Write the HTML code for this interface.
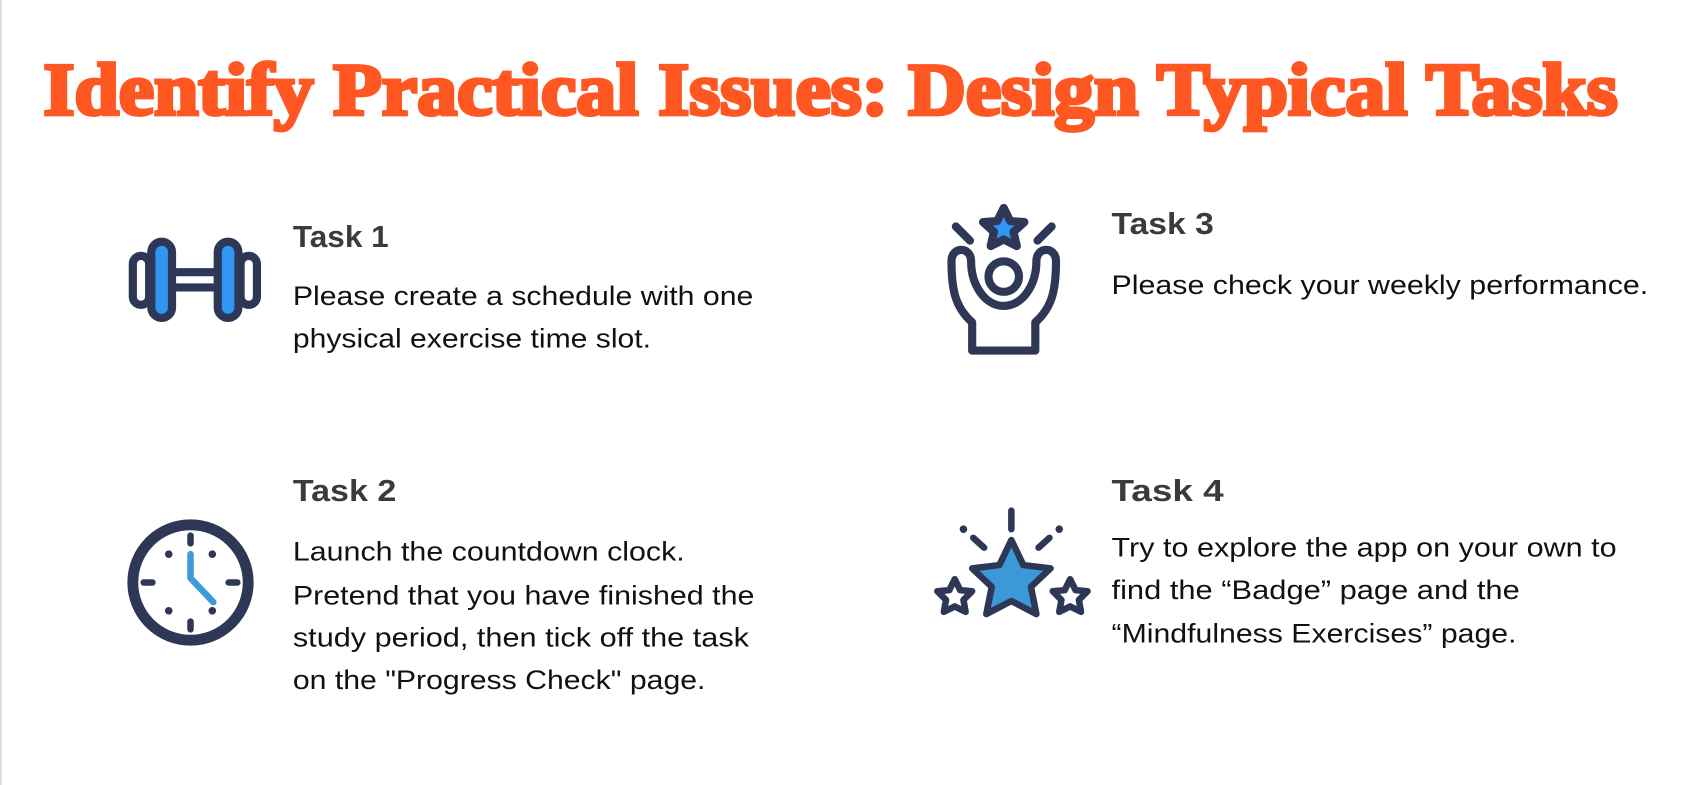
<!DOCTYPE html>
<html><head><meta charset="utf-8"><style>
html,body{margin:0;padding:0;background:#fff;width:1707px;height:785px;overflow:hidden}
svg{display:block}
</style></head><body>
<svg width="1707" height="785" viewBox="0 0 1568 721" preserveAspectRatio="none" xmlns="http://www.w3.org/2000/svg">
<rect x="0" y="0" width="1.5" height="721" fill="#d8d8d8"/>
<text x="40" y="105" font-family="Liberation Serif, serif" font-weight="bold" font-size="68" fill="#FF5722" stroke="#FF5722" stroke-width="3.5" textLength="1446" lengthAdjust="spacingAndGlyphs">Identify Practical Issues: Design Typical Tasks</text>

<g font-family="Liberation Sans, sans-serif" fill="#3b3b3b">
<text x="269" y="227" font-weight="bold" font-size="28" textLength="88" lengthAdjust="spacingAndGlyphs">Task 1</text>
<text x="1021" y="215" font-weight="bold" font-size="28" textLength="94" lengthAdjust="spacingAndGlyphs">Task 3</text>
<text x="269" y="460" font-weight="bold" font-size="28" textLength="95" lengthAdjust="spacingAndGlyphs">Task 2</text>
<text x="1021" y="460" font-weight="bold" font-size="28" textLength="103" lengthAdjust="spacingAndGlyphs">Task  4</text>
</g>
<g font-family="Liberation Sans, sans-serif" fill="#111" font-size="25">
<text x="269" y="280" textLength="423" lengthAdjust="spacingAndGlyphs">Please create a schedule with one</text>
<text x="269" y="319" textLength="329" lengthAdjust="spacingAndGlyphs">physical exercise time slot.</text>
<text x="1021" y="270" textLength="493" lengthAdjust="spacingAndGlyphs">Please check your weekly performance.</text>
<text x="269" y="515" textLength="360" lengthAdjust="spacingAndGlyphs">Launch the countdown clock.</text>
<text x="269" y="555" textLength="424" lengthAdjust="spacingAndGlyphs">Pretend that you have finished the</text>
<text x="269" y="594" textLength="419" lengthAdjust="spacingAndGlyphs">study period, then tick off the task</text>
<text x="269" y="633" textLength="379" lengthAdjust="spacingAndGlyphs">on the "Progress Check" page.</text>
<text x="1021" y="511" textLength="464" lengthAdjust="spacingAndGlyphs">Try to explore the app on your own to</text>
<text x="1021" y="550" textLength="375" lengthAdjust="spacingAndGlyphs">find the “Badge” page and the</text>
<text x="1021" y="590" textLength="372" lengthAdjust="spacingAndGlyphs">“Mindfulness Exercises” page.</text>
</g>

<!-- dumbbell -->
<g stroke="#2e3856" stroke-width="7.5" stroke-linejoin="round">
<rect x="122" y="235" width="15" height="45" rx="7.5" fill="#fff"/>
<rect x="221" y="235" width="15" height="45" rx="7.5" fill="#fff"/>
<rect x="157" y="250" width="44" height="14" fill="#fff"/>
<rect x="139" y="222" width="19" height="70" rx="9.5" fill="#2f96f3"/>
<rect x="200" y="222" width="19" height="70" rx="9.5" fill="#2f96f3"/>
</g>

<!-- clock -->
<g stroke="#2e3856" stroke-linecap="round" fill="none">
<circle cx="175" cy="535" r="53" stroke-width="10"/>
<g stroke-width="6">
<line x1="175" y1="492" x2="175" y2="499"/>
<line x1="175" y1="571" x2="175" y2="578"/>
<line x1="132" y1="535" x2="140" y2="535"/>
<line x1="210" y1="535" x2="218" y2="535"/>
</g>
<g stroke-width="7">
<line x1="155" y1="509" x2="155" y2="509"/>
<line x1="195" y1="509" x2="195" y2="509"/>
<line x1="155" y1="561" x2="155" y2="561"/>
<line x1="195" y1="561" x2="195" y2="561"/>
</g>
<polyline points="175,509 175,531 196,553" stroke="#3d9bd8" stroke-width="6" stroke-linejoin="round"/>
</g>

<!-- raised hands -->
<g stroke="#2e3856" stroke-width="7.5" stroke-linecap="round" stroke-linejoin="round" fill="none">
<polygon points="922,191 928,203 941,204 931,213 934,226 922,220 910,226 913,213 903,204 916,203" fill="#2f96f3"/>
<line x1="878" y1="208" x2="891" y2="221"/>
<line x1="966" y1="208" x2="953" y2="221"/>
<circle cx="922" cy="254" r="14"/>
<path d="M893,322 L893,296 C877,282 874,265 874,240 C874,226 892,226 892,240 C892,262 905,281 922,281 C939,281 952,262 952,240 C952,226 970,226 970,240 C970,265 967,282 951,296 L951,322 Z"/>
</g>

<!-- stars -->
<g stroke="#2e3856" stroke-width="6" stroke-linecap="round" stroke-linejoin="round" fill="none">
<line x1="929" y1="469" x2="929" y2="486"/>
<line x1="894" y1="494" x2="904" y2="503"/>
<line x1="964" y1="494" x2="954" y2="503"/>
<line x1="885" y1="486" x2="885" y2="486" stroke-width="7"/>
<line x1="973" y1="486" x2="973" y2="486" stroke-width="7"/>
<polygon points="929,496 940,519 965,522 947,539 952,564 929,552 906,564 911,539 893,522 918,519" fill="#3b9ad6"/>
<polygon points="877,532 882,542 893,543 885,551 887,562 877,557 867,562 869,551 861,543 872,542" fill="#fff"/>
<polygon points="983,532 988,542 999,543 991,551 993,562 983,557 973,562 975,551 967,543 978,542" fill="#fff"/>
</g>
</svg>
</body></html>
